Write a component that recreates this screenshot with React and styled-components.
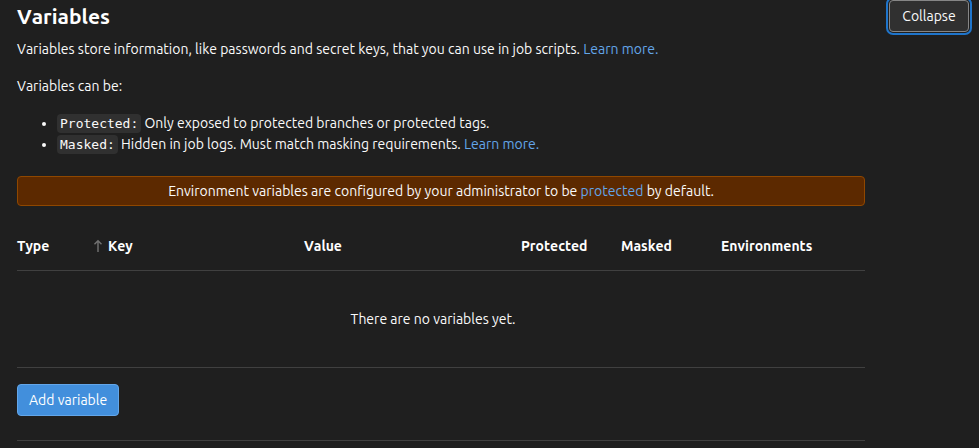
import React from "react";
import styled, { createGlobalStyle } from "styled-components";

const GlobalStyle = createGlobalStyle`
  *, *::before, *::after { box-sizing: border-box; }
  body {
    margin: 0;
    background: #1f1f1f;
    color: #fafafa;
    font-family: Ubuntu, "Noto Sans", sans-serif;
    font-size: 14px;
    line-height: 20px;
    font-kerning: none;
    font-variant-ligatures: none;
  }
`;

const Page = styled.div`
  display: flex;
  align-items: flex-start;
  gap: 24px;
  padding: 0 10px 0 17px;
`;

const Section = styled.section`
  flex: 1;
  min-width: 0;
  border-bottom: 1px solid #404040;
  padding: 4px 0 24px;
`;

const Title = styled.h4`
  margin: 0 0 10px;
  font-size: 21px;
  line-height: 25px;
  font-weight: 700;
  color: #fff;
`;

const Paragraph = styled.p`
  margin: 0 0 17px;
`;

const List = styled.ul`
  margin: 0 0 21px;
  padding-left: 40px;
  line-height: 21px;
`;

const Code = styled.code`
  padding: 2px 3px;
  border-radius: 4px;
  background: #303030;
  font-family: "DejaVu Sans Mono", monospace;
  font-size: 13px;
`;

const Link = styled.a`
  color: #63a6e9;
  text-decoration: none;
  &:hover { text-decoration: underline; }
`;

const Notice = styled.p`
  margin: 0 0 30px;
  padding: 4px;
  border: 1px solid #8f4700;
  border-radius: 4px;
  background: #5c2900;
  text-align: center;
`;

const Table = styled.table`
  width: 100%;
  table-layout: fixed;
  border-collapse: collapse;
  border-bottom: 1px solid #404040;
  margin-bottom: 16px;
`;

const Column = styled.col`
  width: ${(p) => p.$width};
`;

const HeaderCell = styled.th`
  padding: 0 0 14px;
  border-bottom: 1px solid #404040;
  text-align: left;
  font-weight: 700;
  color: #fff;
`;

const SortLabel = styled.span`
  display: flex;
  align-items: center;
  gap: 4px;
`;

const EmptyCell = styled.td`
  padding: 38px 16px 38px 0;
  text-align: center;
`;

const Button = styled.button`
  min-width: 80px;
  height: 32px;
  padding: 0 11px;
  border: 1px solid;
  border-radius: 4px;
  font: inherit;
  line-height: 16px;
  white-space: nowrap;
  cursor: pointer;
`;

const PrimaryButton = styled(Button)`
  border-color: #63a6e9;
  background: #428fdc;
  color: #fff;
`;

const CollapseButton = styled(Button)`
  border-color: #868686;
  background: #303030;
  color: #fafafa;
  box-shadow: 0 0 0 1px #1f1f1f, 0 0 0 3px #1f75cb;
`;

const SortArrow = () => (
  <svg width="12" height="14" viewBox="0 0 12 14" fill="none" stroke="#737373" strokeWidth="1.4" aria-hidden="true">
    <path d="M6 13V2M2.5 5.2L6 1.7l3.5 3.5" />
  </svg>
);

const columns = [
  { label: "Type", width: "75px" },
  { label: "Key", width: "25%", sorted: true },
  { label: "Value", width: "auto" },
  { label: "Protected", width: "100px" },
  { label: "Masked", width: "100px" },
  { label: "Environments", width: "144px" },
];

export default function App() {
  return (
    <>
      <GlobalStyle />
      <Page>
        <Section>
          <Title>Variables</Title>
          <Paragraph>
            Variables store information, like passwords and secret keys, that you can use in job scripts.{" "}
            <Link href="#variables">Learn more.</Link>
          </Paragraph>
          <Paragraph>Variables can be:</Paragraph>
          <List>
            <li><Code>Protected:</Code> Only exposed to protected branches or protected tags.</li>
            <li>
              <Code>Masked:</Code> Hidden in job logs. Must match masking requirements.{" "}
              <Link href="#masking">Learn more.</Link>
            </li>
          </List>
          <Notice>
            Environment variables are configured by your administrator to be{" "}
            <Link href="#protected">protected</Link> by default.
          </Notice>
          <Table>
            <colgroup>
              {columns.map((c) => <Column key={c.label} $width={c.width} />)}
            </colgroup>
            <thead>
              <tr>
                {columns.map((c) => (
                  <HeaderCell key={c.label} scope="col" aria-sort={c.sorted ? "ascending" : undefined}>
                    {c.sorted ? <SortLabel><SortArrow />{c.label}</SortLabel> : c.label}
                  </HeaderCell>
                ))}
              </tr>
            </thead>
            <tbody>
              <tr><EmptyCell colSpan={columns.length}>There are no variables yet.</EmptyCell></tr>
            </tbody>
          </Table>
          <PrimaryButton type="button">Add variable</PrimaryButton>
        </Section>
        <CollapseButton type="button" aria-expanded="true">Collapse</CollapseButton>
      </Page>
    </>
  );
}
